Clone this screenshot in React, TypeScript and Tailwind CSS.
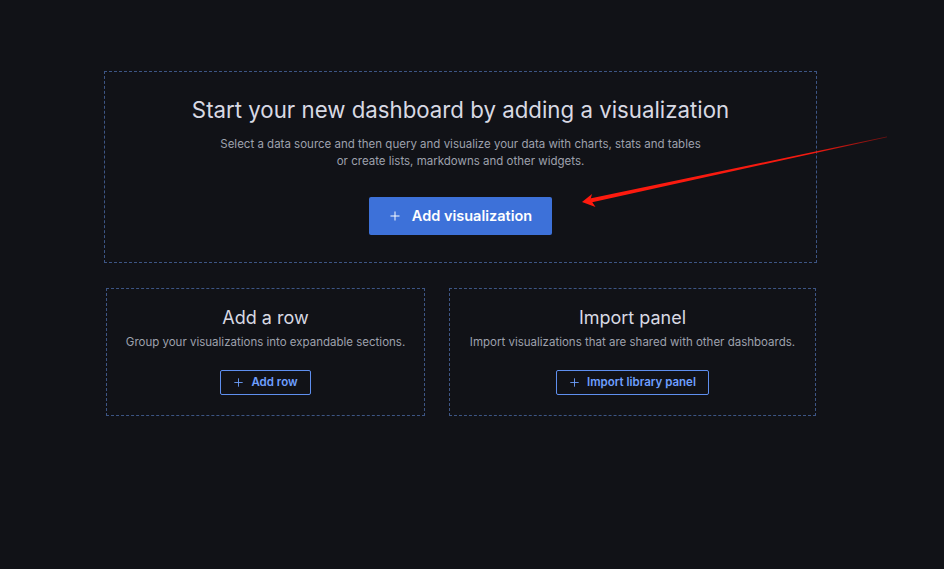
import React from 'react';

function PlusIcon({ className }: { className?: string }) {
    return (
        <svg viewBox="0 0 16 16" className={className} fill="none" stroke="currentColor" strokeWidth="1.3" strokeLinecap="round">
            <path d="M8 2.5v11M2.5 8h11" />
        </svg>
    );
}

function SmallCard({
    title,
    text,
    action,
    width,
}: {
    title: string;
    text: string;
    action: string;
    width: string;
}) {
    return (
        <div className={`${width} h-[128px] border border-dashed border-[#3d5584] flex flex-col items-center pt-[17px]`}>
            <h2 className="text-[18px] leading-[24px] text-[#d8d9e3] font-normal">{title}</h2>
            <p className="mt-[4px] text-[11.5px] leading-[16px] text-[#9ea1ad]">{text}</p>
            <button className="mt-[20px] h-[25px] px-[12px] flex items-center gap-[7px] border border-[#5f8fef] rounded-[2px] text-[11.5px] font-semibold text-[#6e9fff]">
                <PlusIcon className="w-[11px] h-[11px]" />
                {action}
            </button>
        </div>
    );
}

export default function App() {
    return (
        <div
            className="relative min-h-screen w-full bg-[#111217] overflow-hidden"
            style={{ fontFamily: 'Inter, "Liberation Sans", sans-serif' }}
        >
            <div className="pt-[71px] pl-[104px] w-[817px]">
                {/* Main empty state */}
                <div className="w-[713px] h-[192px] border border-dashed border-[#3d5584] flex flex-col items-center pt-[24px]">
                    <h1 className="text-[22.25px] leading-[28px] text-[#d8d9e3] font-normal">
                        Start your new dashboard by adding a visualization
                    </h1>
                    <p className="mt-[12px] text-[11.5px] leading-[17px] text-[#9ea1ad] text-center">
                        Select a data source and then query and visualize your data with charts, stats and tables
                        <br />
                        or create lists, markdowns and other widgets.
                    </p>
                    <button className="mt-[27px] h-[38px] w-[183px] bg-[#3d71d9] rounded-[2px] flex items-center justify-center gap-[11px] text-white text-[14.5px] font-semibold">
                        <PlusIcon className="w-[12px] h-[12px]" />
                        Add visualization
                    </button>
                </div>

                {/* Secondary cards */}
                <div className="mt-[25px] flex gap-[24px] pl-[2px]">
                    <SmallCard
                        title="Add a row"
                        text="Group your visualizations into expandable sections."
                        action="Add row"
                        width="w-[319px]"
                    />
                    <SmallCard
                        title="Import panel"
                        text="Import visualizations that are shared with other dashboards."
                        action="Import library panel"
                        width="w-[367px]"
                    />
                </div>
            </div>

            {/* Annotation arrow */}
            <svg className="absolute left-0 top-0 pointer-events-none" width="944" height="569" viewBox="0 0 944 569">
                <defs>
                    <linearGradient id="arrowFade" x1="583" y1="202" x2="887" y2="137" gradientUnits="userSpaceOnUse">
                        <stop offset="0" stopColor="#ff1a0e" />
                        <stop offset="0.75" stopColor="#f41a10" />
                        <stop offset="1" stopColor="#6b1010" />
                    </linearGradient>
                </defs>
                <polygon points="590,198.6 887,136.5 887,137.2 591,202.4" fill="url(#arrowFade)" />
                <polygon points="582,202 592,194 590.5,199.5 595.5,207" fill="#ff1a0e" />
            </svg>
        </div>
    );
}
